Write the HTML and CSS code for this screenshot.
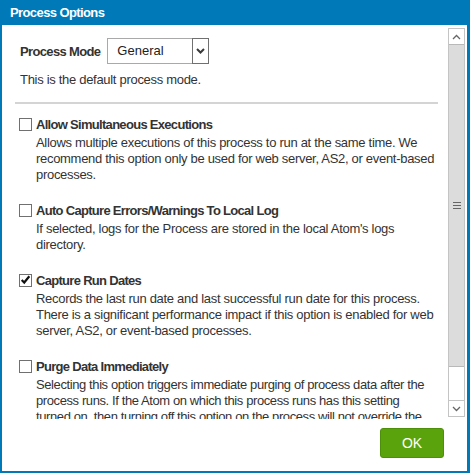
FILE: index.html
```html
<!DOCTYPE html>
<html>
<head>
<meta charset="utf-8">
<link rel="stylesheet" href="styles.css">
</head>
<body>
<div class="window">
  <div class="titlebar">Process Options</div>
  <div class="body">
    <div class="main">
      <div class="pane">
        <div class="mode-row">
          <span class="mode-label">Process Mode</span>
          <div class="select">
            <span class="select-text">General</span>
            <span class="select-arrow">
              <svg width="9" height="6" viewBox="0 0 9 6"><path d="M1 1 L4.5 4.5 L8 1" fill="none" stroke="#3a3a3a" stroke-width="2"/></svg>
            </span>
          </div>
        </div>
        <div class="mode-desc">This is the default process mode.</div>
        <div class="rule"></div>

        <div class="option">
          <div class="opt-title"><span class="cb"></span>Allow Simultaneous Executions</div>
          <div class="opt-desc">Allows multiple executions of this process to run at the same time. We recommend this option only be used for web server, AS2, or event-based processes.</div>
        </div>
        <div class="option">
          <div class="opt-title"><span class="cb"></span>Auto Capture Errors/Warnings To Local Log</div>
          <div class="opt-desc">If selected, logs for the Process are stored in the local Atom's logs directory.</div>
        </div>
        <div class="option">
          <div class="opt-title"><span class="cb"><svg width="13" height="12" viewBox="0 0 13 12"><path d="M2 6 L5 9 L11 1.5" fill="none" stroke="#111" stroke-width="2.6"/></svg></span>Capture Run Dates</div>
          <div class="opt-desc">Records the last run date and last successful run date for this process. There is a significant performance impact if this option is enabled for web server, AS2, or event-based processes.</div>
        </div>
        <div class="option">
          <div class="opt-title"><span class="cb"></span>Purge Data Immediately</div>
          <div class="opt-desc opt-desc-fixed">Selecting this option triggers immediate purging of process data after the<br>process runs. If the Atom on which this process runs has this setting<br>turned on, then turning off this option on the process will not override the<br>Atom setting.</div>
        </div>
      </div>
      <div class="scrollbar">
        <div class="sb-btn">
          <svg width="9" height="6" viewBox="0 0 9 6"><path d="M1 5 L4.5 1.5 L8 5" fill="none" stroke="#666" stroke-width="1.3"/></svg>
        </div>
        <div class="sb-thumb">
          <svg width="8" height="7" viewBox="0 0 8 7"><path d="M0 0.5 H8 M0 3.5 H8 M0 6.5 H8" stroke="#666" stroke-width="1"/></svg>
        </div>
        <div class="sb-track"></div>
        <div class="sb-btn">
          <svg width="9" height="6" viewBox="0 0 9 6"><path d="M1 1 L4.5 4.5 L8 1" fill="none" stroke="#666" stroke-width="1.3"/></svg>
        </div>
      </div>
    </div>
    <div class="footer">
      <button class="ok">OK</button>
    </div>
  </div>
</div>
</body>
</html>
```
FILE: styles.css
```css
html, body {
  margin: 0;
  padding: 0;
}
body {
  font-family: "Liberation Sans", Arial, sans-serif;
  font-size: 13px;
  color: #333;
  background: #fff;
  letter-spacing: -0.3px;
}
.window {
  width: 470px;
  height: 473px;
  background: #0079b8;
  display: flex;
  flex-direction: column;
  box-sizing: border-box;
  padding: 0 3px 2px 2px;
}
.titlebar {
  height: 25px;
  line-height: 26px;
  padding-left: 8px;
  color: #fff;
  font-weight: bold;
  font-size: 13px;
  letter-spacing: -0.6px;
  flex: none;
}
.body {
  flex: 1;
  background: #fff;
  display: flex;
  flex-direction: column;
  min-height: 0;
}
.main {
  height: 395px;
  display: flex;
  flex: none;
}
.pane {
  flex: 1;
  overflow: hidden;
  padding: 13px 0 0 13px;
  height: 381px;
}
.mode-row {
  display: flex;
  align-items: center;
  padding-left: 5px;
  height: 26px;
}
.mode-label {
  font-weight: bold;
  letter-spacing: -0.65px;
  margin-right: 7px;
}
.select {
  width: 102px;
  height: 26px;
  box-sizing: border-box;
  border: 1px solid #a9a9a9;
  display: flex;
  align-items: stretch;
}
.select-text {
  flex: 1;
  padding-left: 9px;
  line-height: 24px;
  color: #222;
  letter-spacing: 0;
}
.select-arrow {
  width: 17px;
  box-sizing: border-box;
  border: 1px solid #707070;
  display: flex;
  align-items: center;
  justify-content: center;
  margin: -1px -1px -1px 0;
}
.mode-desc {
  padding-left: 5px;
  margin-top: 8px;
  line-height: 16px;
}
.rule {
  height: 0;
  border-top: 2px solid #d4d4d4;
  margin: 14px 10px 13px 0;
  width: 423px;
}
.option {
  padding-left: 4px;
  margin-bottom: 20px;
  width: 425px;
}
.opt-title {
  display: flex;
  align-items: center;
  font-weight: bold;
  letter-spacing: -0.7px;
  height: 16px;
  line-height: 16px;
}
.cb {
  width: 13px;
  height: 13px;
  box-sizing: border-box;
  border: 1px solid #707070;
  background: #fff;
  margin-right: 4px;
  display: flex;
  align-items: center;
  justify-content: center;
  flex: none;
  position: relative;
  top: -1px;
}
.cb svg {
  margin-top: -1px;
}
.opt-desc {
  padding-left: 17px;
  margin-top: 2px;
  line-height: 16px;
}
.opt-desc-fixed {
  white-space: nowrap;
  letter-spacing: -0.4px;
}
.scrollbar {
  width: 17px;
  margin: 3px 2px 0 0;
  height: 389px;
  display: flex;
  flex-direction: column;
  flex: none;
  box-sizing: border-box;
  border: 1px solid #c4c4c4;
  background: #fff;
}
.sb-btn {
  height: 15px;
  display: flex;
  align-items: center;
  justify-content: center;
  background: #fff;
  flex: none;
}
.sb-thumb {
  height: 323px;
  background: #dcdcdc;
  border-top: 1px solid #b9b9b9;
  border-bottom: 1px solid #b9b9b9;
  box-sizing: border-box;
  display: flex;
  align-items: center;
  justify-content: center;
  flex: none;
}
.sb-track {
  flex: 1;
  border-bottom: 1px solid #c4c4c4;
}
.footer {
  flex: 1;
  display: flex;
  justify-content: flex-end;
  align-items: flex-start;
  padding: 8px 23px 0 0;
}
.ok {
  width: 64px;
  height: 30px;
  background: #5ba30c;
  border: 1px solid #4c8f08;
  border-radius: 3px;
  color: #fff;
  font-family: "Liberation Sans", Arial, sans-serif;
  font-size: 14px;
  letter-spacing: 0;
  padding: 0;
}
```
